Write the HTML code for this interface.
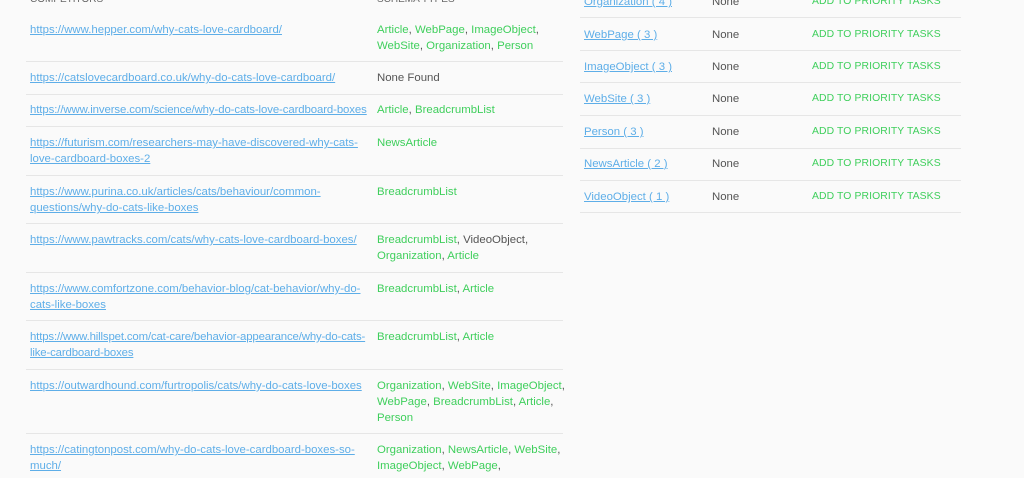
<!DOCTYPE html>
<html><head><meta charset="utf-8"><style>
body{margin:0;width:1024px;height:478px;overflow:hidden;background:#fafafa;font-family:"Liberation Sans",sans-serif;font-size:11.4px;color:#555;position:relative}
.a{position:absolute;white-space:nowrap;line-height:16px;margin-top:1px}
.l{color:#5eaee8;text-decoration:underline}
.g{color:#3fcf5c}
.h{border-top:1px solid #e6e6e6;position:absolute;height:0}
.t{font-size:10.4px;color:#3fcf5c;letter-spacing:.1px}
</style></head><body>
<div class="a" style="left:30px;top:-9px;color:#666;font-size:10px">COMPETITORS</div>
<div class="a" style="left:377px;top:-9px;color:#666;font-size:10px">SCHEMA TYPES</div>

<div class="a l" style="left:30px;top:21px">https://www.hepper.com/why-cats-love-cardboard/</div>
<div class="a g" style="left:377px;top:21px">Article<span style="color:#555">,</span> WebPage<span style="color:#555">,</span> ImageObject<span style="color:#555">,</span><br>WebSite<span style="color:#555">,</span> Organization<span style="color:#555">,</span> Person</div>
<div class="h" style="left:26px;width:537px;top:61px"></div>

<div class="a l" style="left:30px;top:69px">https://catslovecardboard.co.uk/why-do-cats-love-cardboard/</div>
<div class="a" style="left:377px;top:69px">None Found</div>
<div class="h" style="left:26px;width:537px;top:94px"></div>

<div class="a l" style="left:30px;top:101px;letter-spacing:-.1px">https://www.inverse.com/science/why-do-cats-love-cardboard-boxes</div>
<div class="a g" style="left:377px;top:101px">Article<span style="color:#555">,</span> BreadcrumbList</div>
<div class="h" style="left:26px;width:537px;top:126px"></div>

<div class="a l" style="left:30px;top:134px">https://futurism.com/researchers-may-have-discovered-why-cats-<br>love-cardboard-boxes-2</div>
<div class="a g" style="left:377px;top:134px">NewsArticle</div>
<div class="h" style="left:26px;width:537px;top:175px"></div>

<div class="a l" style="left:30px;top:183px">https://www.purina.co.uk/articles/cats/behaviour/common-<br>questions/why-do-cats-like-boxes</div>
<div class="a g" style="left:377px;top:183px">BreadcrumbList</div>
<div class="h" style="left:26px;width:537px;top:223px"></div>

<div class="a l" style="left:30px;top:231px">https://www.pawtracks.com/cats/why-cats-love-cardboard-boxes/</div>
<div class="a g" style="left:377px;top:231px">BreadcrumbList<span style="color:#555">, VideoObject,</span><br>Organization<span style="color:#555">,</span> Article</div>
<div class="h" style="left:26px;width:537px;top:272px"></div>

<div class="a l" style="left:30px;top:280px">https://www.comfortzone.com/behavior-blog/cat-behavior/why-do-<br>cats-like-boxes</div>
<div class="a g" style="left:377px;top:280px">BreadcrumbList<span style="color:#555">,</span> Article</div>
<div class="h" style="left:26px;width:537px;top:320px"></div>

<div class="a l" style="left:30px;top:328px;letter-spacing:-.15px">https://www.hillspet.com/cat-care/behavior-appearance/why-do-cats-<br>like-cardboard-boxes</div>
<div class="a g" style="left:377px;top:328px">BreadcrumbList<span style="color:#555">,</span> Article</div>
<div class="h" style="left:26px;width:537px;top:369px"></div>

<div class="a l" style="left:30px;top:377px">https://outwardhound.com/furtropolis/cats/why-do-cats-love-boxes</div>
<div class="a g" style="left:377px;top:377px">Organization<span style="color:#555">,</span> WebSite<span style="color:#555">,</span> ImageObject<span style="color:#555">,</span><br>WebPage<span style="color:#555">,</span> BreadcrumbList<span style="color:#555">,</span> Article<span style="color:#555">,</span><br>Person</div>
<div class="h" style="left:26px;width:537px;top:433px"></div>

<div class="a l" style="left:30px;top:441px">https://catingtonpost.com/why-do-cats-love-cardboard-boxes-so-<br>much/</div>
<div class="a g" style="left:377px;top:441px">Organization<span style="color:#555">,</span> NewsArticle<span style="color:#555">,</span> WebSite<span style="color:#555">,</span><br>ImageObject<span style="color:#555">,</span> WebPage<span style="color:#555">,</span></div>

<div class="a l" style="left:584px;top:-7px">Organization ( 4 )</div>
<div class="a" style="left:712px;top:-7px">None</div>
<div class="a t" style="left:812px;top:-7px">ADD TO PRIORITY TASKS</div>
<div class="h" style="left:580px;width:381px;top:17px"></div>

<div class="a l" style="left:584px;top:26px">WebPage ( 3 )</div>
<div class="a" style="left:712px;top:26px">None</div>
<div class="a t" style="left:812px;top:26px">ADD TO PRIORITY TASKS</div>
<div class="h" style="left:580px;width:381px;top:50px"></div>

<div class="a l" style="left:584px;top:58px">ImageObject ( 3 )</div>
<div class="a" style="left:712px;top:58px">None</div>
<div class="a t" style="left:812px;top:58px">ADD TO PRIORITY TASKS</div>
<div class="h" style="left:580px;width:381px;top:82px"></div>

<div class="a l" style="left:584px;top:90px">WebSite ( 3 )</div>
<div class="a" style="left:712px;top:90px">None</div>
<div class="a t" style="left:812px;top:90px">ADD TO PRIORITY TASKS</div>
<div class="h" style="left:580px;width:381px;top:115px"></div>

<div class="a l" style="left:584px;top:123px">Person ( 3 )</div>
<div class="a" style="left:712px;top:123px">None</div>
<div class="a t" style="left:812px;top:123px">ADD TO PRIORITY TASKS</div>
<div class="h" style="left:580px;width:381px;top:148px"></div>

<div class="a l" style="left:584px;top:155px">NewsArticle ( 2 )</div>
<div class="a" style="left:712px;top:155px">None</div>
<div class="a t" style="left:812px;top:155px">ADD TO PRIORITY TASKS</div>
<div class="h" style="left:580px;width:381px;top:180px"></div>

<div class="a l" style="left:584px;top:188px">VideoObject ( 1 )</div>
<div class="a" style="left:712px;top:188px">None</div>
<div class="a t" style="left:812px;top:188px">ADD TO PRIORITY TASKS</div>
<div class="h" style="left:580px;width:381px;top:212px"></div>
</body></html>
